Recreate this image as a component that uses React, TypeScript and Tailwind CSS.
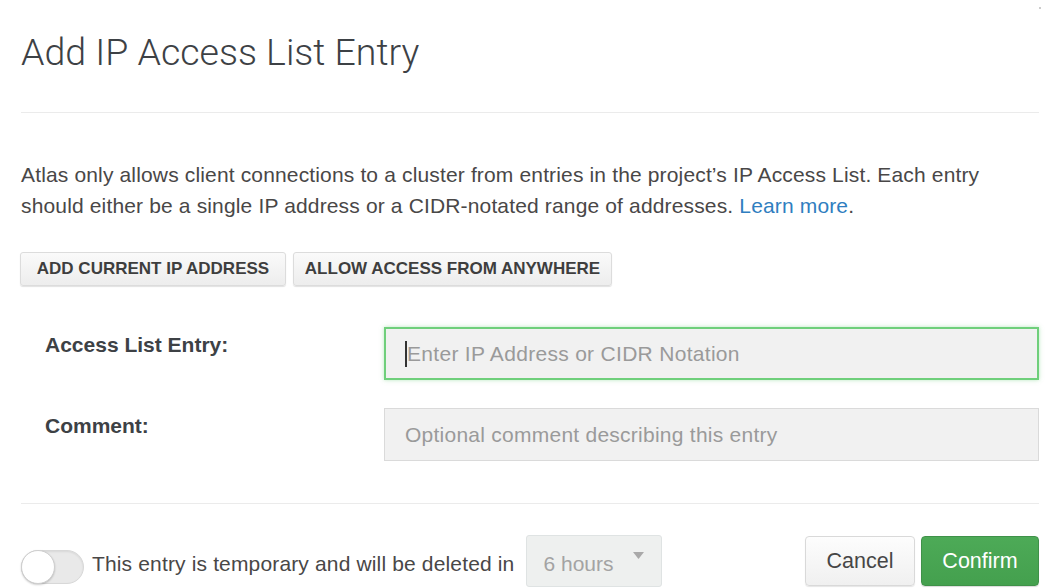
import React from 'react';

const sans = "font-['Liberation_Sans','Helvetica_Neue',Arial,sans-serif]";

function Toggle() {
  return (
    <div className="relative h-[34px] w-[63px] shrink-0 rounded-full border border-[#d8d8d8] bg-[#e9e9e9] shadow-[inset_0_1px_2px_rgba(0,0,0,0.08)]">
      <div className="absolute left-[-1px] top-[-1px] h-[34px] w-[34px] rounded-full border border-[#cfcfcf] bg-white shadow-[0_1px_2px_rgba(0,0,0,0.2)]" />
    </div>
  );
}

export default function App() {
  return (
    <div className={`${sans} relative h-[588px] w-[1046px] overflow-hidden bg-white text-[#494747]`}>
      <div className="absolute right-[5px] top-[7px] h-[2px] w-[2px] rounded-full bg-[#bbb]" />
      <div className="pl-[21px] pr-[7px]">
        <h1 className="pt-[27px] h-[112px] font-['Roboto',sans-serif] text-[37.5px] font-light leading-[50px] text-[#3d4145]">
          Add IP Access List Entry
        </h1>
        <div className="h-px bg-[#ebebeb]" />

        <p className="mt-[46px] whitespace-nowrap text-[21px] leading-[31px] text-[#494747] tracking-[0.15px]">
          Atlas only allows client connections to a cluster from entries in the project’s IP Access List. Each entry
          <br />
          should either be a single IP address or a CIDR-notated range of addresses.{' '}
          <span className="text-[#2f7ec0]">Learn more</span>.
        </p>

        <div className="mt-[31px] ml-[-1px] flex gap-[7px]">
          <button className="h-[34px] w-[266px] rounded-[3px] border border-[#dcdcdc] bg-gradient-to-b from-[#fafafa] to-[#ededed] text-[17px] font-bold text-[#3e3e3e] shadow-[0_1px_1px_rgba(0,0,0,0.12)]">
            ADD CURRENT IP ADDRESS
          </button>
          <button className="h-[34px] w-[319px] rounded-[3px] border border-[#dcdcdc] bg-gradient-to-b from-[#fafafa] to-[#ededed] text-[17px] font-bold text-[#3e3e3e] shadow-[0_1px_1px_rgba(0,0,0,0.12)]">
            ALLOW ACCESS FROM ANYWHERE
          </button>
        </div>

        <div className="mt-[41px] flex">
          <div className="w-[363px] pl-[24px] pt-[2px] text-[21px] font-bold text-[#3d4145]">Access List Entry:</div>
          <div className="flex h-[53px] flex-1 items-center border-2 border-[#6fcf7b] bg-[#f1f1f1] pl-[19px] shadow-[0_0_4px_rgba(111,207,123,0.5)]">
            <span className="h-[26px] w-[2px] bg-[#333]" />
            <span className="text-[21px] tracking-[0.3px] text-[#9a9a9a]">Enter IP Address or CIDR Notation</span>
          </div>
        </div>

        <div className="mt-[28px] flex">
          <div className="w-[363px] pl-[24px] pt-[2px] text-[21px] font-bold text-[#3d4145]">Comment:</div>
          <div className="flex h-[53px] flex-1 items-center border border-[#dadada] bg-[#f1f1f1] pl-[20px]">
            <span className="text-[21px] tracking-[0.25px] text-[#9a9a9a]">Optional comment describing this entry</span>
          </div>
        </div>

        <div className="mt-[42px] h-px bg-[#ebebeb]" />

        <div className="mt-[31px] flex items-center">
          <div className="mt-[12px] flex items-center">
            <Toggle />
            <span className="ml-[8px] mt-[-7px] text-[21px] text-[#494747] tracking-[0.15px]">This entry is temporary and will be deleted in</span>
          </div>
          <div className="ml-[12px] flex h-[52px] w-[136px] items-center justify-between rounded-[3px] border border-[#dfe3e3] bg-[#eef0ef] pl-[16px] pr-[17px] pt-[2px]">
            <span className="mt-[4px] text-[21px] text-[#a3a3a3]">6 hours</span>
            <svg width="11" height="8" viewBox="0 0 11 8" className="mb-[12px]">
              <path d="M0 0h11L5.5 7z" fill="#a9a9a9" />
            </svg>
          </div>
          <div className="ml-auto flex gap-[6px]">
            <button className="h-[50px] w-[110px] rounded-[4px] border border-[#d9d9d9] bg-gradient-to-b from-[#fdfdfd] to-[#f0f0f0] text-[21.5px] text-[#464646] shadow-[0_1px_1px_rgba(0,0,0,0.1)]">
              Cancel
            </button>
            <button className="h-[50px] w-[118px] rounded-[4px] border border-[#3f9149] bg-gradient-to-b from-[#4daa57] to-[#44a04e] text-[21.5px] text-white shadow-[0_1px_1px_rgba(0,0,0,0.15)]">
              Confirm
            </button>
          </div>
        </div>
      </div>
    </div>
  );
}
